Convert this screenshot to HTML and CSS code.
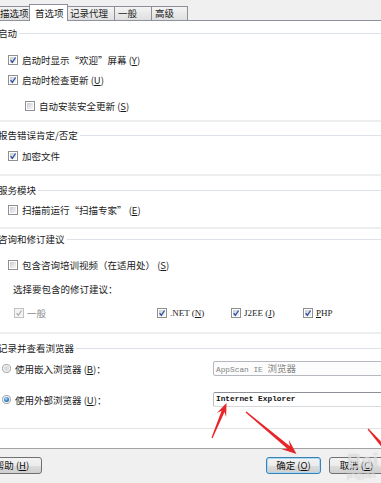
FILE: index.html
```html
<!DOCTYPE html>
<html lang="zh-CN">
<head>
    <meta charset="UTF-8">
    <meta name="viewport" content="width=device-width, initial-scale=1.0">
    <title>首选项</title>
    <link rel="stylesheet" href="styles.css">
</head>
<body>
    <svg class="defs" width="0" height="0">
        <defs>
            <linearGradient id="boxfill" x1="0" y1="0" x2="1" y2="1">
                <stop offset="0" stop-color="#c9ced6"/>
                <stop offset="1" stop-color="#f7f7f7"/>
            </linearGradient>
            <radialGradient id="dot" cx="0.4" cy="0.35" r="0.7">
                <stop offset="0" stop-color="#b9e2fb"/>
                <stop offset="0.6" stop-color="#3a8ad6"/>
                <stop offset="1" stop-color="#1c5a9a"/>
            </radialGradient>
            <symbol id="cb-off" viewBox="0 0 10 10">
                <rect x="0.5" y="0.5" width="9" height="9" fill="#fff" stroke="#8f8f8f"/>
                <rect x="2" y="2" width="6" height="6" fill="url(#boxfill)"/>
            </symbol>
            <symbol id="cb-on" viewBox="0 0 10 10">
                <rect x="0.5" y="0.5" width="9" height="9" fill="#fff" stroke="#8f8f8f"/>
                <rect x="2" y="2" width="6" height="6" fill="url(#boxfill)"/>
                <path d="M2.6 5.2 L4.3 7.3 L7.6 2.5" fill="none" stroke="#2c4c9e" stroke-width="1.3"/>
            </symbol>
            <symbol id="cb-dis" viewBox="0 0 10 10">
                <rect x="0.5" y="0.5" width="9" height="9" fill="#f4f4f4" stroke="#c2c2c2"/>
                <path d="M2.6 5.2 L4.3 7.3 L7.6 2.5" fill="none" stroke="#a9a9a9" stroke-width="1.2"/>
            </symbol>
            <symbol id="rb-off" viewBox="0 0 10 10">
                <circle cx="5" cy="5" r="4.5" fill="#f1f1f1" stroke="#9a9a9a"/>
                <circle cx="5" cy="5" r="2.8" fill="#dcdcdc"/>
            </symbol>
            <symbol id="rb-on" viewBox="0 0 10 10">
                <circle cx="5" cy="5" r="4.5" fill="#f1f1f1" stroke="#9a9a9a"/>
                <circle cx="5" cy="5" r="2.8" fill="url(#dot)"/>
            </symbol>
        </defs>
    </svg>

    <div class="tabs">
        <div class="tab t1">描选项</div>
        <div class="tab t2 active">首选项</div>
        <div class="tab t3">记录代理</div>
        <div class="tab t4">一般</div>
        <div class="tab t5">高级</div>
    </div>

    <div class="panel">
        <section class="group g1">
            <div class="legend">启动</div>
            <label class="check r1"><svg class="box"><use href="#cb-on"/></svg>启动时显示“欢迎”屏幕 (<u>Y</u>)</label>
            <label class="check r2"><svg class="box"><use href="#cb-on"/></svg>启动时检查更新 (<u>U</u>)</label>
            <label class="check sub r3"><svg class="box"><use href="#cb-off"/></svg>自动安装安全更新 (<u>S</u>)</label>
        </section>

        <section class="group g2">
            <div class="legend">报告错误肯定/否定</div>
            <label class="check r4"><svg class="box"><use href="#cb-on"/></svg>加密文件</label>
        </section>

        <section class="group g3">
            <div class="legend">服务模块</div>
            <label class="check r5"><svg class="box"><use href="#cb-off"/></svg>扫描前运行“扫描专家” (<u>E</u>)</label>
        </section>

        <section class="group g4">
            <div class="legend">咨询和修订建议</div>
            <label class="check r6"><svg class="box"><use href="#cb-off"/></svg>包含咨询培训视频（在适用处） (<u>S</u>)</label>
            <div class="hint">选择要包含的修订建议：</div>
            <div class="opts">
                <label class="opt o1 disabled"><svg class="box"><use href="#cb-dis"/></svg>一般</label>
                <label class="opt o2"><svg class="box"><use href="#cb-on"/></svg><span class="latin">.NET (<u>N</u>)</span></label>
                <label class="opt o3"><svg class="box"><use href="#cb-on"/></svg><span class="latin">J2EE (<u>J</u>)</span></label>
                <label class="opt o4"><svg class="box"><use href="#cb-on"/></svg><span class="latin"><u>P</u>HP</span></label>
            </div>
        </section>

        <section class="group g5">
            <div class="legend">记录并查看浏览器</div>
            <div class="radio-row b1">
                <label class="radio"><svg class="dot"><use href="#rb-off"/></svg>使用嵌入浏览器 (<u>B</u>)：</label>
                <div class="field off">AppScan IE <span class="cjk">浏览器</span></div>
            </div>
            <div class="radio-row b2">
                <label class="radio"><svg class="dot"><use href="#rb-on"/></svg>使用外部浏览器 (<u>U</u>)：</label>
                <div class="field on">Internet Explorer</div>
            </div>
        </section>
    </div>

    <div class="footer">
        <button class="btn help">帮助 (<u>H</u>)</button>
        <button class="btn ok">确定 (<u>O</u>)</button>
        <button class="btn cancel">取消 (<u>C</u>)</button>
    </div>

    <!-- red annotation arrows drawn over the dialog -->
    <svg class="marks" viewBox="0 0 381 483">
        <polygon points="211.45,437.77 221.57,410.70 216.9,413.09 226.5,403 226.14,416.92 224.53,411.92 212.55,438.23"/>
        <polygon points="245.55,412.54 287.66,448.99 281.14,449.03 296.5,454 288.80,439.81 289.96,446.23 246.45,411.46"/>
        <polygon points="367.6,429.4 368.4,428.6 384,444.5 381.5,447"/>
    </svg>
    <div class="wm">Bai<span>jingyan</span></div>
</body>
</html>
```

FILE: styles.css
```css
* {
    box-sizing: border-box;
}
body {
    margin: 0;
    width: 381px;
    height: 483px;
    overflow: hidden;
    position: relative;
    font-family: "Noto Sans CJK SC", "Liberation Sans", sans-serif;
    font-size: 9.5px;
    color: #1b1b1b;
    background: #fff;
}
u {
    text-decoration: underline;
    text-underline-offset: 1px;
}
.defs {
    position: absolute;
}

/* tab strip */
.tabs {
    display: flex;
    align-items: flex-end;
    height: 21px;
    background: #f0f0f0;
    border-bottom: 1px solid #8e939b;
}
.tab {
    height: 14px;
    line-height: 13px;
    padding-left: 3px;
    border: 1px solid #8c8f96;
    border-bottom: none;
    background: linear-gradient(#f4f4f4, #e9e9e9 50%, #dfdfdf);
    white-space: nowrap;
    overflow: hidden;
}
.tab.t1 {
    width: 35px;
    margin-left: -4px;
}
.tab.t2 {
    width: 39px;
    margin: 0 -2px -1px;
}
.tab.t3 {
    width: 49px;
}
.tab.t4 {
    width: 38px;
    margin-left: -1px;
}
.tab.t5 {
    width: 37px;
    margin-left: -1px;
}
.tab.active {
    position: relative;
    z-index: 1;
    height: 17px;
    line-height: 17px;
    padding-left: 5px;
    background: #fff;
}

/* option groups */
.panel {
    background: #fff;
    padding-bottom: 19px;
}
.group {
    border-bottom: 2px solid #eceeef;
}
.g1 { padding: 6px 0 8px; }
.g2 { padding: 7px 0 12px; }
.g3 { padding: 8px 0 11px; }
.g4 { padding: 4px 0 13px; }
.g5 {
    padding: 8px 0 21px;
    border-bottom: 1px solid #e2e2e2;
}
.legend {
    display: flex;
    align-items: center;
    gap: 2px;
    height: 12px;
    line-height: 12px;
    margin-left: -2px;
    white-space: nowrap;
}
.legend::after {
    content: "";
    flex: 1;
    height: 1px;
    background: #dce2e8;
}
.check {
    display: flex;
    align-items: center;
    height: 12px;
    padding-left: 8px;
    white-space: nowrap;
}
.check.sub {
    padding-left: 25px;
}
.box {
    width: 10px;
    height: 10px;
    flex: none;
    margin-right: 4px;
}
.r1 { margin-top: 15px; }
.r2 { margin-top: 8px; }
.r3 { margin-top: 14px; }
.r4 { margin-top: 9px; }
.r5 { margin-top: 8px; }
.r6 { margin-top: 14px; }
.hint {
    height: 12px;
    line-height: 12px;
    margin-top: 12px;
    padding-left: 13px;
}
.opts {
    display: flex;
    height: 12px;
    margin-top: 12px;
    padding-left: 14px;
}
.opt {
    display: flex;
    align-items: center;
    white-space: nowrap;
}
.opt .box {
    margin-right: 3px;
}
.o1 { width: 143px; }
.o2 { width: 74px; }
.o3 { width: 72px; }
.disabled {
    color: #8a8a8a;
}
.latin {
    font-family: "Liberation Serif", "Noto Sans CJK SC", serif;
    font-size: 9px;
}

/* browser choice */
.radio-row {
    display: grid;
    grid-template-columns: 211px 1fr;
    height: 15px;
    padding-left: 2px;
    margin-right: -4px;
}
.b1 { margin-top: 7px; }
.b2 { margin-top: 16px; }
.radio {
    display: flex;
    align-items: center;
    white-space: nowrap;
}
.dot {
    width: 9px;
    height: 9px;
    flex: none;
    margin-right: 4px;
}
.field {
    height: 15px;
    line-height: 13px;
    padding-left: 2px;
    border: 1px solid #b5b8bf;
    border-radius: 2px;
    font-family: "Liberation Mono", monospace;
    font-size: 7.8px;
    white-space: nowrap;
}
.field.off {
    color: #858585;
    background: #fcfcfc;
}
.field.on {
    color: #111;
    font-weight: bold;
    border-color: #8d9096 #c9cbd0 #d7d9dd #b8bbc1;
    background: #fff;
}
.cjk {
    font-family: "Noto Sans CJK SC", sans-serif;
    font-size: 9.5px;
    font-weight: normal;
}

/* dialog buttons */
.footer {
    display: flex;
    height: 35px;
    padding-top: 8px;
    background: #f0f0f0;
    border-top: 1px solid #a3a3a3;
}
.btn {
    height: 17px;
    padding: 0;
    font-family: inherit;
    font-size: 9.5px;
    line-height: 15px;
    color: #111;
    border: 1px solid #707070;
    border-radius: 3px;
    background: linear-gradient(#f3f3f3, #ebebeb 50%, #dddddd 51%, #cfcfcf);
    white-space: nowrap;
}
.btn.help {
    width: 60px;
    margin-left: -18px;
}
.btn.ok {
    width: 55px;
    margin-left: auto;
    border-color: #3c7fb1;
    box-shadow: inset 0 0 0 1px #a8d8f5;
}
.btn.cancel {
    width: 55px;
    margin-left: 8px;
    margin-right: -3px;
}

/* annotation overlay */
.marks {
    position: absolute;
    left: 0;
    top: 0;
    width: 381px;
    height: 483px;
    pointer-events: none;
}
.marks polygon {
    fill: #e8262a;
}
.wm {
    position: absolute;
    left: 347px;
    top: 452px;
    font-family: "Liberation Sans", sans-serif;
    font-weight: bold;
    font-size: 20px;
    line-height: 18px;
    color: rgba(255, 255, 255, 0.55);
    text-shadow: 0 0 1px rgba(120, 120, 120, 0.45);
    pointer-events: none;
}
.wm span {
    display: block;
    font-size: 9px;
    font-weight: normal;
    line-height: 10px;
}
```
